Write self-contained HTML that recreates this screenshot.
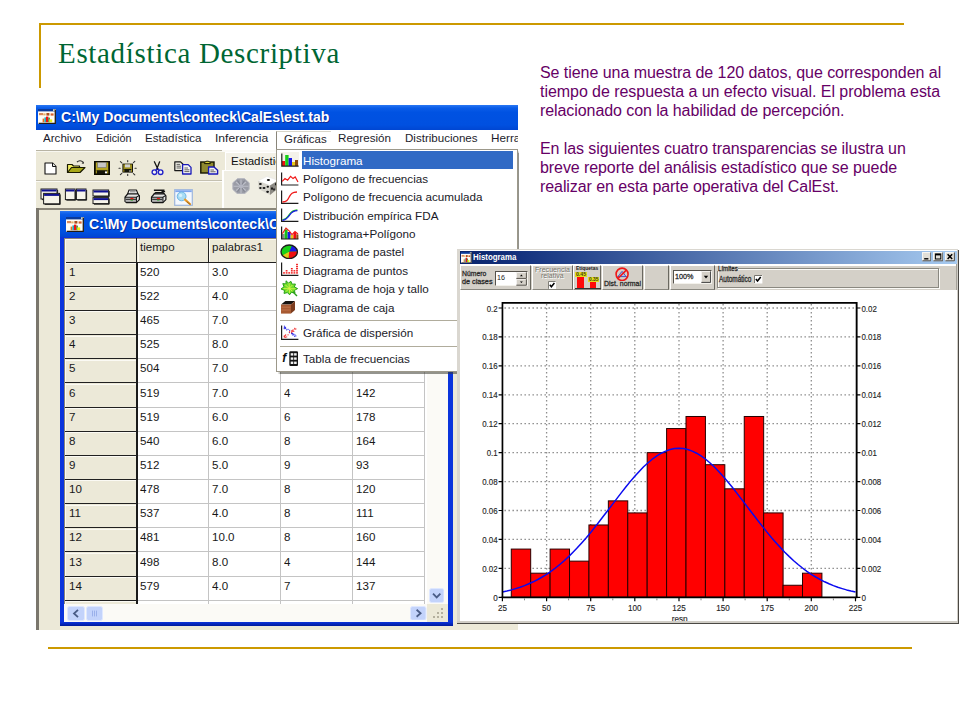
<!DOCTYPE html>
<html lang="es">
<head>
<meta charset="utf-8">
<title>Estadística Descriptiva</title>
<style>
html,body{margin:0;padding:0}
body{width:960px;height:720px;background:#fff;position:relative;overflow:hidden;font-family:"Liberation Sans",sans-serif}
.a{position:absolute}
.gold{position:absolute;background:#cc9900}
#title{position:absolute;left:58px;top:38.6px;margin:0;font-family:"Liberation Serif",serif;font-weight:normal;font-size:29px;line-height:29px;letter-spacing:.67px;color:#006633;white-space:nowrap}
#para{position:absolute;left:540px;top:63px;margin:0;font-family:"Liberation Sans",sans-serif;font-size:16px;line-height:19px;color:#660066;letter-spacing:-.08px;white-space:nowrap}
#para .l{letter-spacing:-.05px}
.t{position:absolute;white-space:nowrap;line-height:1}
</style>
</head>
<body>
<div class="gold" style="left:39px;top:23px;width:865px;height:2px"></div>
<div class="gold" style="left:39px;top:23px;width:2px;height:65px"></div>
<div class="gold" style="left:48px;top:647px;width:864px;height:2px"></div>
<h1 id="title">Estadística Descriptiva</h1>
<p id="para"><span class="l">Se tiene una muestra de 120 datos, que corresponden al</span><br><span class="l">tiempo de respuesta a un efecto visual. El problema esta</span><br>relacionado con la habilidad de percepción.<br><br>En las siguientes cuatro transparencias se ilustra un<br>breve reporte del análisis estadístico que se puede<br>realizar en esta parte operativa del CalEst.</p>

<div class="a" style="left:0;top:0;width:518px;height:630px;overflow:hidden">
<div class="a" style="left:36px;top:105px;width:482px;height:525px;background:#ece9d8"></div>
<div class="a" style="left:36px;top:105px;width:482px;height:25px;background:linear-gradient(#2a78f4 0,#0a5ce8 12%,#0052e2 30%,#0050e0 80%,#0046d2 100%)"></div>
<svg class="a" style="left:38px;top:109px" width="18" height="15" viewBox="0 0 18 15" preserveAspectRatio="none"><rect x="0" y="0" width="18" height="15" fill="#fffdf6"/><rect x="0" y="0" width="17" height="2.4" fill="#0a3a9a"/><rect x="15" y="0.3" width="2" height="1.6" fill="#dfe6d0"/><rect x="1" y="4" width="4" height="2.2" fill="#d98a5a"/><rect x="5.2" y="4.4" width="2.4" height="2" fill="#e9b26a"/><rect x="8.4" y="4" width="3" height="2.6" fill="#a8501e"/><rect x="12.6" y="4.4" width="3" height="2.2" fill="#d6602a"/><rect x="4.6" y="9.6" width="1.8" height="3.6" fill="#e8701a"/><rect x="6.4" y="8.4" width="1.6" height="4.8" fill="#20b0c0"/><rect x="8" y="7.6" width="2.4" height="5.6" fill="#f01010"/><rect x="10.4" y="8.6" width="1.4" height="4.6" fill="#208030"/><rect x="11.2" y="10.4" width="3" height="2.8" fill="#e8f018"/><path d="M17.3 0.5V14.3H0.6" fill="none" stroke="#231a10" stroke-width="1.3"/></svg>
<div class="t" style="left:61.00px;top:110.53px;font-size:13.9px;color:#fff;transform:scaleX(1.0134);transform-origin:0 0;font-weight:bold;text-shadow:1px 1px 0 #0a2a9a;">C:\My Documents\conteck\CalEs\est.tab</div>
<div class="a" style="left:36px;top:130px;width:482px;height:20px;background:#fff"></div>
<div class="a" style="left:276px;top:131px;width:55px;height:20px;background:#fff;border-left:1px solid #8a867a;border-top:1px solid #d8d5c8;box-sizing:border-box"></div>
<div class="t" style="left:42.90px;top:133.45px;font-size:11.4px;color:#1c1c2c;transform:scaleX(1.0180);transform-origin:0 0;">Archivo</div>
<div class="t" style="left:95.75px;top:133.45px;font-size:11.4px;color:#1c1c2c;transform:scaleX(0.9494);transform-origin:0 0;">Edición</div>
<div class="t" style="left:144.50px;top:133.45px;font-size:11.4px;color:#1c1c2c;transform:scaleX(1.0133);transform-origin:0 0;">Estadística</div>
<div class="t" style="left:214.75px;top:133.45px;font-size:11.4px;color:#1c1c2c;transform:scaleX(1.0616);transform-origin:0 0;">Inferencia</div>
<div class="t" style="left:283.50px;top:134.45px;font-size:11.4px;color:#1c1c2c;transform:scaleX(1.0060);transform-origin:0 0;">Gráficas</div>
<div class="t" style="left:338.20px;top:133.45px;font-size:11.4px;color:#1c1c2c;transform:scaleX(1.0199);transform-origin:0 0;">Regresión</div>
<div class="t" style="left:404.90px;top:133.45px;font-size:11.4px;color:#1c1c2c;transform:scaleX(1.0140);transform-origin:0 0;">Distribuciones</div>
<div class="t" style="left:490.80px;top:133.45px;font-size:11.4px;color:#1c1c2c;transform:scaleX(1.0300);transform-origin:0 0;">Herramientas</div>
<div class="a" style="left:36px;top:150px;width:186px;height:1px;background:#b8b4a4"></div>
<div class="a" style="left:36px;top:151px;width:186px;height:1px;background:#f8f7f0"></div>
<div class="a" style="left:36px;top:180px;width:186px;height:1px;background:#c4c0b0"></div>
<div class="a" style="left:36px;top:181px;width:186px;height:1px;background:#fbfaf5"></div>
<div class="a" style="left:222px;top:150px;width:296px;height:2px;background:#fbfaf6"></div>
<div class="a" style="left:225px;top:152px;width:60px;height:19px;background:#f3f1e7;border-left:1px solid #fff;border-top:1px solid #fff;box-sizing:border-box"></div>
<div class="t" style="left:231.20px;top:155.92px;font-size:11.2px;color:#101010;transform:scaleX(1.0300);transform-origin:0 0;">Estadística</div>
<div class="a" style="left:222px;top:170px;width:296px;height:38px;background:#f0eee3;border-left:2px solid #fff;border-top:1px solid #fff;box-sizing:border-box"></div>
<svg class="a" style="left:43.5px;top:161.5px" width="13" height="13" viewBox="0 0 13 13"><path d="M1 1H8.5L12 4.5V12H1Z" fill="#fff" stroke="#111" stroke-width="1.1" stroke-linejoin="round"/><path d="M8.5 1V4.5H12" fill="#e8e8e8" stroke="#111" stroke-width="1"/></svg>
<svg class="a" style="left:66px;top:159px" width="20" height="15" viewBox="0 0 20 15"><path d="M1.5 5.5H6L7.5 7H13.5V13.5H1.5Z" fill="#f2ee62" stroke="#1a1a00" stroke-width="1.2" stroke-linejoin="round"/><path d="M1.5 13.5L5.5 8.5H19L14 13.5Z" fill="#a8a818" stroke="#1a1a00" stroke-width="1.2" stroke-linejoin="round"/><path d="M11 3.2C12.5 1.4 15.5 1.2 17 3.4" fill="none" stroke="#222" stroke-width="1.1"/><path d="M15.6 4.6L17.8 4.8L17.9 2.4Z" fill="#222"/></svg>
<svg class="a" style="left:93.5px;top:160.5px" width="16" height="14" viewBox="0 0 16 14"><rect x="0.6" y="0.6" width="14.8" height="12.8" fill="#15150a" stroke="#0a0a00" stroke-width="1.2"/><rect x="1.8" y="1.4" width="12.4" height="7" fill="#b8a822"/><rect x="3.6" y="1.4" width="8.6" height="5.2" fill="#c6c6c6" stroke="#6e6e6e" stroke-width=".6"/><rect x="1.8" y="8.2" width="12.4" height="1" fill="#c8b828"/><rect x="1.8" y="9.4" width="1" height="3" fill="#b8a822"/><rect x="13.2" y="9.4" width="1" height="3" fill="#b8a822"/><circle cx="12" cy="11.4" r="1.1" fill="#fff"/></svg>
<svg class="a" style="left:118px;top:159.5px" width="19" height="16" viewBox="0 0 19 16"><rect x="4.4" y="3.6" width="10.6" height="9" fill="#15150a"/><rect x="5.4" y="4.4" width="8.6" height="4.6" fill="#9c8f20"/><rect x="7" y="4.4" width="5" height="3" fill="#d2d2d2"/><rect x="5.4" y="9.4" width="0.9" height="2.4" fill="#b8a822"/><rect x="13.1" y="9.4" width="0.9" height="2.4" fill="#b8a822"/><circle cx="12" cy="11" r=".8" fill="#ddd"/><g stroke="#333" stroke-width="1.1" stroke-linecap="round"><path d="M9.7 .6V1.8M9.7 14.4V15.4M1 8.2H2.2M17 8.2H18.2M2.4 1.6L3.8 2.8M16.8 1.4L15.4 2.6M2.4 14.6L3.8 13.4M16.8 14.8L15.4 13.6"/></g></svg>
<svg class="a" style="left:151px;top:160.5px" width="13" height="15" viewBox="0 0 13 15"><path d="M3.4 .8L7 8.6M8.6 .8L5.6 8.6" stroke="#151515" stroke-width="1.3" fill="none" stroke-linecap="round"/><circle cx="3.4" cy="11.2" r="2.3" fill="#fff" fill-opacity=".6" stroke="#2222c8" stroke-width="1.4"/><circle cx="9.6" cy="11.2" r="2.3" fill="#fff" fill-opacity=".6" stroke="#2222c8" stroke-width="1.4"/><path d="M4.6 9.4L6 7.6M8.4 9.4L7 7.6" stroke="#2222c8" stroke-width="1.3"/></svg>
<svg class="a" style="left:173.5px;top:160.5px" width="18" height="14" viewBox="0 0 18 14"><path d="M.8 .8H6.6L8.8 3V9.6H.8Z" fill="#ecebe2" stroke="#1a1a1a" stroke-width="1.2" stroke-linejoin="round"/><path d="M2.6 3.4H6M2.6 5.2H7M2.6 7H7" stroke="#555" stroke-width=".9"/><path d="M8.6 3.6H14.2L17 6.4V13H8.6Z" fill="#f4f4f4" stroke="#1818b8" stroke-width="1.3" stroke-linejoin="round"/><path d="M10.4 7H14M10.4 8.8H15.4M10.4 10.6H15.4" stroke="#666" stroke-width="1"/></svg>
<svg class="a" style="left:199.5px;top:160px" width="19" height="15" viewBox="0 0 19 15"><rect x=".8" y="2" width="13.2" height="11" fill="#8f8a30" stroke="#141400" stroke-width="1.4"/><path d="M4.4 3.6C4.4 .4 10.4 .4 10.4 3.6Z" fill="#d8d23a" stroke="#141400" stroke-width="1"/><path d="M8.6 7H14L17.6 10.2V14H8.6Z" fill="#f2f2f6" stroke="#1818b8" stroke-width="1.4" stroke-linejoin="round"/><path d="M10.4 10H14M10.4 11.8H15.6" stroke="#666" stroke-width="1.1"/></svg>
<svg class="a" style="left:40px;top:188px" width="22" height="18" viewBox="0 0 22 18"><rect x="1" y="1" width="16" height="10" fill="#f6f4ea" stroke="#1c1c1c" stroke-width="1"/><rect x="1.5" y="1.5" width="15" height="2" fill="#101090"/><path d="M17.6 2V11.6H2" stroke="#1c1c1c" stroke-width="1" fill="none"/><rect x="3.6" y="5.4" width="16" height="10.4" fill="#f6f4ea" stroke="#1c1c1c" stroke-width="1"/><rect x="4.1" y="5.9" width="15" height="2" fill="#101090"/><path d="M20.200000000000003 6.4V16.400000000000002H4.6" stroke="#1c1c1c" stroke-width="1" fill="none"/></svg>
<svg class="a" style="left:64px;top:188px" width="24" height="14" viewBox="0 0 24 14"><rect x="1.4" y="1" width="9.6" height="10.6" fill="#f6f4ea" stroke="#1c1c1c" stroke-width="1"/><rect x="1.9" y="1.5" width="8.6" height="2" fill="#101090"/><path d="M11.6 2V12.2H2.4" stroke="#1c1c1c" stroke-width="1" fill="none"/><rect x="12.4" y="1" width="9.6" height="10.6" fill="#f6f4ea" stroke="#1c1c1c" stroke-width="1"/><rect x="12.9" y="1.5" width="8.6" height="2" fill="#101090"/><path d="M22.6 2V12.2H13.4" stroke="#1c1c1c" stroke-width="1" fill="none"/></svg>
<svg class="a" style="left:92px;top:189px" width="19" height="17" viewBox="0 0 19 17"><rect x="1" y="1" width="15.6" height="6" fill="#f6f4ea" stroke="#1c1c1c" stroke-width="1"/><rect x="1.5" y="1.5" width="14.6" height="2" fill="#101090"/><path d="M17.200000000000003 2V7.6H2" stroke="#1c1c1c" stroke-width="1" fill="none"/><rect x="1" y="8.6" width="15.6" height="6" fill="#f6f4ea" stroke="#1c1c1c" stroke-width="1"/><rect x="1.5" y="9.1" width="14.6" height="2" fill="#101090"/><path d="M17.200000000000003 9.6V15.2H2" stroke="#1c1c1c" stroke-width="1" fill="none"/></svg>
<svg class="a" style="left:124px;top:189px" width="17" height="16" viewBox="0 0 17 16"><path d="M5 1H12.4L14 5H3.6Z" fill="#efefef" stroke="#151515" stroke-width="1.1" stroke-linejoin="round"/><path d="M6 2.8H11.6" stroke="#666" stroke-width=".8"/><path d="M3.6 5L1 8.2V12.4L2.4 13.6H12.4L15.4 10.6V6.8L14 5Z" fill="#e4e4e4" stroke="#151515" stroke-width="1.2" stroke-linejoin="round"/><path d="M1 8.2H12.4L15.4 6.4M12.4 8.2V13.6" stroke="#151515" stroke-width="1.1" fill="none"/><rect x="1.6" y="9.6" width="10.4" height="1.5" fill="#3c3c3c"/><rect x="1.6" y="11.6" width="10.4" height="1.2" fill="#8a8a8a"/><rect x="6.4" y="8.9" width="3" height="1.4" fill="#e81818"/><rect x="6.6" y="10.6" width="2.4" height=".9" fill="#18a018"/></svg>
<svg class="a" style="left:149.5px;top:189px" width="18" height="16" viewBox="0 0 17 16"><path d="M3.4 1.2H14M11 2.6H14.6" stroke="#151515" stroke-width="1.4"/><path d="M5 3.6H12.8L14 5H3.6Z" fill="#efefef" stroke="#151515" stroke-width="1.1" stroke-linejoin="round"/><path d="M6 4.2H6" stroke="#666" stroke-width=".8"/><path d="M3.6 5L1 8.2V12.4L2.4 13.6H12.4L15.4 10.6V6.8L14 5Z" fill="#e4e4e4" stroke="#151515" stroke-width="1.2" stroke-linejoin="round"/><path d="M1 8.2H12.4L15.4 6.4M12.4 8.2V13.6" stroke="#151515" stroke-width="1.1" fill="none"/><rect x="1.6" y="9.6" width="10.4" height="1.5" fill="#3c3c3c"/><rect x="1.6" y="11.6" width="10.4" height="1.2" fill="#8a8a8a"/><rect x="6.4" y="8.9" width="3" height="1.4" fill="#e81818"/><rect x="6.6" y="10.6" width="2.4" height=".9" fill="#18a018"/></svg>
<svg class="a" style="left:173.5px;top:188.5px" width="19" height="17" viewBox="0 0 19 17"><rect x=".7" y=".7" width="17.6" height="15.6" fill="#f4f8fe" stroke="#9eb6dc" stroke-width="1.2"/><rect x="1.3" y="1.3" width="16.4" height="1.8" fill="#7ea6ee"/><circle cx="7.6" cy="7.4" r="4.4" fill="#a8dcf4" stroke="#6eb6e4" stroke-width="1"/><circle cx="6.6" cy="6.4" r="1.6" fill="#d8f2fc"/><path d="M11 10.6L16 15" stroke="#e89a2a" stroke-width="2.2" stroke-linecap="round"/><path d="M12.6 12.6L16.4 15.6" stroke="#8a5a1a" stroke-width=".8"/></svg>
<svg class="a" style="left:231.5px;top:177.5px" width="18" height="16.5" viewBox="0 0 18 16.5"><path d="M5.6 .6H12.4L17.2 4.8V11.4L12.6 15.8H5.4L.8 11.4V4.8Z" fill="#9a9ca6" stroke="#b9bac2" stroke-width="1"/><path d="M4 4L14 12.6M14 4L4 12.6M9 1.4V15M1.6 8.2H16.4" stroke="#c6c8d2" stroke-width="1.1" opacity=".8"/><path d="M5.6 2.6L12.4 13.8M12.4 2.6L5.6 13.8" stroke="#7c7e8c" stroke-width="1" opacity=".8"/><circle cx="9" cy="8.2" r="2" fill="#b4b6c2"/></svg>
<svg class="a" style="left:256.5px;top:174.5px" width="22" height="21" viewBox="0 0 22 21"><path d="M1 6L10 1.4L21 5.4L13 10.6Z" fill="#fff" stroke="#e6e6e6" stroke-width=".6"/><path d="M1 6L13 10.6V20L1.6 14Z" fill="#d6d4cc"/><path d="M13 10.6L21 5.4V13.6L13 20Z" fill="#8c8a84"/><ellipse cx="11.4" cy="5" rx="1.6" ry=".9" fill="#111"/><ellipse cx="3.4" cy="9" rx="1.4" ry="1.1" fill="#111"/><ellipse cx="7" cy="13" rx="1.5" ry="1.1" fill="#111"/><ellipse cx="10.6" cy="16.8" rx="1.4" ry="1.1" fill="#111"/><ellipse cx="3.4" cy="13" rx="1.2" ry="1" fill="#111"/><ellipse cx="10.8" cy="11.8" rx="1.2" ry="1" fill="#111"/><ellipse cx="15" cy="13.6" rx=".9" ry="1.4" fill="#111"/><ellipse cx="19" cy="9.2" rx=".9" ry="1.4" fill="#111"/><ellipse cx="17" cy="14.4" rx=".8" ry="1.2" fill="#111"/></svg>
<div class="a" style="left:36px;top:208px;width:482px;height:2px;background:#8a867a"></div>
<div class="a" style="left:36px;top:208px;width:2.5px;height:422px;background:#7a766c"></div>
<div class="a" style="left:60px;top:211px;width:392.5px;height:414.5px;background:#0a34dc"></div>
<div class="a" style="left:60px;top:621.5px;width:392.5px;height:4px;background:linear-gradient(#0a34dc,#001a9a)"></div>
<div class="a" style="left:60px;top:211px;width:392.5px;height:26px;background:linear-gradient(#2a78f4 0,#0a5ce8 12%,#0052e2 30%,#0050e0 80%,#0046d2 100%)"></div>
<svg class="a" style="left:65.5px;top:216.5px" width="18" height="15" viewBox="0 0 18 15" preserveAspectRatio="none"><rect x="0" y="0" width="18" height="15" fill="#fffdf6"/><rect x="0" y="0" width="17" height="2.4" fill="#0a3a9a"/><rect x="15" y="0.3" width="2" height="1.6" fill="#dfe6d0"/><rect x="1" y="4" width="4" height="2.2" fill="#d98a5a"/><rect x="5.2" y="4.4" width="2.4" height="2" fill="#e9b26a"/><rect x="8.4" y="4" width="3" height="2.6" fill="#a8501e"/><rect x="12.6" y="4.4" width="3" height="2.2" fill="#d6602a"/><rect x="4.6" y="9.6" width="1.8" height="3.6" fill="#e8701a"/><rect x="6.4" y="8.4" width="1.6" height="4.8" fill="#20b0c0"/><rect x="8" y="7.6" width="2.4" height="5.6" fill="#f01010"/><rect x="10.4" y="8.6" width="1.4" height="4.6" fill="#208030"/><rect x="11.2" y="10.4" width="3" height="2.8" fill="#e8f018"/><path d="M17.3 0.5V14.3H0.6" fill="none" stroke="#231a10" stroke-width="1.3"/></svg>
<div class="t" style="left:89.20px;top:217.93px;font-size:13.9px;color:#fff;transform:scaleX(1.0134);transform-origin:0 0;font-weight:bold;text-shadow:1px 1px 0 #0a2a9a;">C:\My Documents\conteck\CalEs\est.tab</div>
<div class="a" style="left:64px;top:237.5px;width:384px;height:384px;background:#fff;overflow:hidden">
<div class="a" style="left:-64px;top:-237.5px;width:0;height:0">
<div class="a" style="left:64px;top:237.5px;width:361px;height:25.100000000000023px;background:#ece9d8"></div>
<div class="a" style="left:64px;top:237.5px;width:73.19999999999999px;height:390px;background:#ece9d8"></div>
<div class="a" style="left:64px;top:237.5px;width:384px;height:1px;background:#8a867a"></div>
<div class="a" style="left:64px;top:237.5px;width:1px;height:384px;background:#8a867a"></div>
<div class="t" style="left:140.10px;top:242.42px;font-size:11.2px;color:#181818;transform:scaleX(1.0350);transform-origin:0 0;">tiempo</div>
<div class="t" style="left:211.90px;top:242.42px;font-size:11.2px;color:#181818;transform:scaleX(1.0350);transform-origin:0 0;">palabras1</div>
<div class="t" style="left:283.90px;top:242.42px;font-size:11.2px;color:#181818;transform:scaleX(1.0350);transform-origin:0 0;">palabras2</div>
<div class="t" style="left:355.90px;top:242.42px;font-size:11.2px;color:#181818;transform:scaleX(1.0350);transform-origin:0 0;">resp</div>
<div class="a" style="left:207.7px;top:262.6px;width:1.3px;height:370px;background:#c4c4c4"></div>
<div class="a" style="left:279.7px;top:262.6px;width:1.3px;height:370px;background:#c4c4c4"></div>
<div class="a" style="left:351.7px;top:262.6px;width:1.3px;height:370px;background:#c4c4c4"></div>
<div class="a" style="left:423.7px;top:262.6px;width:1.3px;height:370px;background:#c4c4c4"></div>
<div class="a" style="left:137.2px;top:286px;width:287.8px;height:1.2px;background:#c4c4c4"></div>
<div class="a" style="left:137.2px;top:310px;width:287.8px;height:1.2px;background:#c4c4c4"></div>
<div class="a" style="left:137.2px;top:334px;width:287.8px;height:1.2px;background:#c4c4c4"></div>
<div class="a" style="left:137.2px;top:358px;width:287.8px;height:1.2px;background:#c4c4c4"></div>
<div class="a" style="left:137.2px;top:382px;width:287.8px;height:1.2px;background:#c4c4c4"></div>
<div class="a" style="left:137.2px;top:407px;width:287.8px;height:1.2px;background:#c4c4c4"></div>
<div class="a" style="left:137.2px;top:431px;width:287.8px;height:1.2px;background:#c4c4c4"></div>
<div class="a" style="left:137.2px;top:455px;width:287.8px;height:1.2px;background:#c4c4c4"></div>
<div class="a" style="left:137.2px;top:479px;width:287.8px;height:1.2px;background:#c4c4c4"></div>
<div class="a" style="left:137.2px;top:503px;width:287.8px;height:1.2px;background:#c4c4c4"></div>
<div class="a" style="left:137.2px;top:527px;width:287.8px;height:1.2px;background:#c4c4c4"></div>
<div class="a" style="left:137.2px;top:551px;width:287.8px;height:1.2px;background:#c4c4c4"></div>
<div class="a" style="left:137.2px;top:576px;width:287.8px;height:1.2px;background:#c4c4c4"></div>
<div class="a" style="left:137.2px;top:600px;width:287.8px;height:1.2px;background:#c4c4c4"></div>
<div class="a" style="left:137.2px;top:624px;width:287.8px;height:1.2px;background:#c4c4c4"></div>
<div class="a" style="left:64.5px;top:261.70px;width:360.5px;height:1.3px;background:#202020"></div>
<div class="a" style="left:65px;top:238.5px;width:360px;height:1px;background:#fbfaf4"></div>
<div class="a" style="left:136.1px;top:238px;width:1.4px;height:25.200000000000024px;background:#202020"></div>
<div class="a" style="left:137.6px;top:238.5px;width:1px;height:23.100000000000023px;background:#fbfaf4"></div>
<div class="a" style="left:207.9px;top:238px;width:1.4px;height:25.200000000000024px;background:#202020"></div>
<div class="a" style="left:209.4px;top:238.5px;width:1px;height:23.100000000000023px;background:#fbfaf4"></div>
<div class="a" style="left:279.9px;top:238px;width:1.4px;height:25.200000000000024px;background:#202020"></div>
<div class="a" style="left:281.4px;top:238.5px;width:1px;height:23.100000000000023px;background:#fbfaf4"></div>
<div class="a" style="left:351.9px;top:238px;width:1.4px;height:25.200000000000024px;background:#202020"></div>
<div class="a" style="left:353.4px;top:238.5px;width:1px;height:23.100000000000023px;background:#fbfaf4"></div>
<div class="a" style="left:423.9px;top:238px;width:1.4px;height:25.200000000000024px;background:#202020"></div>
<div class="a" style="left:136.1px;top:262.6px;width:1.5px;height:370px;background:#1a1a1a"></div>
<div class="a" style="left:65px;top:238.5px;width:1px;height:370px;background:#fbfaf4"></div>
<div class="a" style="left:64.5px;top:286px;width:72.69999999999999px;height:1.3px;background:#202020"></div>
<div class="a" style="left:65.5px;top:263.20px;width:70.19999999999999px;height:1px;background:#fbfaf4"></div>
<div class="t" style="left:69.20px;top:266.82px;font-size:11.2px;color:#181818;transform:scaleX(1.0350);transform-origin:0 0;">1</div>
<div class="t" style="left:140.10px;top:266.82px;font-size:11.2px;color:#181818;transform:scaleX(1.0350);transform-origin:0 0;">520</div>
<div class="t" style="left:211.90px;top:266.82px;font-size:11.2px;color:#181818;transform:scaleX(1.0350);transform-origin:0 0;">3.0</div>
<div class="t" style="left:283.90px;top:266.82px;font-size:11.2px;color:#181818;transform:scaleX(1.0350);transform-origin:0 0;">5</div>
<div class="t" style="left:355.90px;top:266.82px;font-size:11.2px;color:#181818;transform:scaleX(1.0350);transform-origin:0 0;">131</div>
<div class="a" style="left:64.5px;top:310px;width:72.69999999999999px;height:1.3px;background:#202020"></div>
<div class="a" style="left:65.5px;top:287.34px;width:70.19999999999999px;height:1px;background:#fbfaf4"></div>
<div class="t" style="left:69.20px;top:290.96px;font-size:11.2px;color:#181818;transform:scaleX(1.0350);transform-origin:0 0;">2</div>
<div class="t" style="left:140.10px;top:290.96px;font-size:11.2px;color:#181818;transform:scaleX(1.0350);transform-origin:0 0;">522</div>
<div class="t" style="left:211.90px;top:290.96px;font-size:11.2px;color:#181818;transform:scaleX(1.0350);transform-origin:0 0;">4.0</div>
<div class="t" style="left:283.90px;top:290.96px;font-size:11.2px;color:#181818;transform:scaleX(1.0350);transform-origin:0 0;">7</div>
<div class="t" style="left:355.90px;top:290.96px;font-size:11.2px;color:#181818;transform:scaleX(1.0350);transform-origin:0 0;">152</div>
<div class="a" style="left:64.5px;top:334px;width:72.69999999999999px;height:1.3px;background:#202020"></div>
<div class="a" style="left:65.5px;top:311.48px;width:70.19999999999999px;height:1px;background:#fbfaf4"></div>
<div class="t" style="left:69.20px;top:315.10px;font-size:11.2px;color:#181818;transform:scaleX(1.0350);transform-origin:0 0;">3</div>
<div class="t" style="left:140.10px;top:315.10px;font-size:11.2px;color:#181818;transform:scaleX(1.0350);transform-origin:0 0;">465</div>
<div class="t" style="left:211.90px;top:315.10px;font-size:11.2px;color:#181818;transform:scaleX(1.0350);transform-origin:0 0;">7.0</div>
<div class="t" style="left:283.90px;top:315.10px;font-size:11.2px;color:#181818;transform:scaleX(1.0350);transform-origin:0 0;">6</div>
<div class="t" style="left:355.90px;top:315.10px;font-size:11.2px;color:#181818;transform:scaleX(1.0350);transform-origin:0 0;">118</div>
<div class="a" style="left:64.5px;top:358px;width:72.69999999999999px;height:1.3px;background:#202020"></div>
<div class="a" style="left:65.5px;top:335.62px;width:70.19999999999999px;height:1px;background:#fbfaf4"></div>
<div class="t" style="left:69.20px;top:339.24px;font-size:11.2px;color:#181818;transform:scaleX(1.0350);transform-origin:0 0;">4</div>
<div class="t" style="left:140.10px;top:339.24px;font-size:11.2px;color:#181818;transform:scaleX(1.0350);transform-origin:0 0;">525</div>
<div class="t" style="left:211.90px;top:339.24px;font-size:11.2px;color:#181818;transform:scaleX(1.0350);transform-origin:0 0;">8.0</div>
<div class="t" style="left:283.90px;top:339.24px;font-size:11.2px;color:#181818;transform:scaleX(1.0350);transform-origin:0 0;">9</div>
<div class="t" style="left:355.90px;top:339.24px;font-size:11.2px;color:#181818;transform:scaleX(1.0350);transform-origin:0 0;">126</div>
<div class="a" style="left:64.5px;top:382px;width:72.69999999999999px;height:1.3px;background:#202020"></div>
<div class="a" style="left:65.5px;top:359.76px;width:70.19999999999999px;height:1px;background:#fbfaf4"></div>
<div class="t" style="left:69.20px;top:363.38px;font-size:11.2px;color:#181818;transform:scaleX(1.0350);transform-origin:0 0;">5</div>
<div class="t" style="left:140.10px;top:363.38px;font-size:11.2px;color:#181818;transform:scaleX(1.0350);transform-origin:0 0;">504</div>
<div class="t" style="left:211.90px;top:363.38px;font-size:11.2px;color:#181818;transform:scaleX(1.0350);transform-origin:0 0;">7.0</div>
<div class="t" style="left:283.90px;top:363.38px;font-size:11.2px;color:#181818;transform:scaleX(1.0350);transform-origin:0 0;">5</div>
<div class="t" style="left:355.90px;top:363.38px;font-size:11.2px;color:#181818;transform:scaleX(1.0350);transform-origin:0 0;">150</div>
<div class="a" style="left:64.5px;top:407px;width:72.69999999999999px;height:1.3px;background:#202020"></div>
<div class="a" style="left:65.5px;top:383.90px;width:70.19999999999999px;height:1px;background:#fbfaf4"></div>
<div class="t" style="left:69.20px;top:387.52px;font-size:11.2px;color:#181818;transform:scaleX(1.0350);transform-origin:0 0;">6</div>
<div class="t" style="left:140.10px;top:387.52px;font-size:11.2px;color:#181818;transform:scaleX(1.0350);transform-origin:0 0;">519</div>
<div class="t" style="left:211.90px;top:387.52px;font-size:11.2px;color:#181818;transform:scaleX(1.0350);transform-origin:0 0;">7.0</div>
<div class="t" style="left:283.90px;top:387.52px;font-size:11.2px;color:#181818;transform:scaleX(1.0350);transform-origin:0 0;">4</div>
<div class="t" style="left:355.90px;top:387.52px;font-size:11.2px;color:#181818;transform:scaleX(1.0350);transform-origin:0 0;">142</div>
<div class="a" style="left:64.5px;top:431px;width:72.69999999999999px;height:1.3px;background:#202020"></div>
<div class="a" style="left:65.5px;top:408.04px;width:70.19999999999999px;height:1px;background:#fbfaf4"></div>
<div class="t" style="left:69.20px;top:411.66px;font-size:11.2px;color:#181818;transform:scaleX(1.0350);transform-origin:0 0;">7</div>
<div class="t" style="left:140.10px;top:411.66px;font-size:11.2px;color:#181818;transform:scaleX(1.0350);transform-origin:0 0;">519</div>
<div class="t" style="left:211.90px;top:411.66px;font-size:11.2px;color:#181818;transform:scaleX(1.0350);transform-origin:0 0;">6.0</div>
<div class="t" style="left:283.90px;top:411.66px;font-size:11.2px;color:#181818;transform:scaleX(1.0350);transform-origin:0 0;">6</div>
<div class="t" style="left:355.90px;top:411.66px;font-size:11.2px;color:#181818;transform:scaleX(1.0350);transform-origin:0 0;">178</div>
<div class="a" style="left:64.5px;top:455px;width:72.69999999999999px;height:1.3px;background:#202020"></div>
<div class="a" style="left:65.5px;top:432.18px;width:70.19999999999999px;height:1px;background:#fbfaf4"></div>
<div class="t" style="left:69.20px;top:435.80px;font-size:11.2px;color:#181818;transform:scaleX(1.0350);transform-origin:0 0;">8</div>
<div class="t" style="left:140.10px;top:435.80px;font-size:11.2px;color:#181818;transform:scaleX(1.0350);transform-origin:0 0;">540</div>
<div class="t" style="left:211.90px;top:435.80px;font-size:11.2px;color:#181818;transform:scaleX(1.0350);transform-origin:0 0;">6.0</div>
<div class="t" style="left:283.90px;top:435.80px;font-size:11.2px;color:#181818;transform:scaleX(1.0350);transform-origin:0 0;">8</div>
<div class="t" style="left:355.90px;top:435.80px;font-size:11.2px;color:#181818;transform:scaleX(1.0350);transform-origin:0 0;">164</div>
<div class="a" style="left:64.5px;top:479px;width:72.69999999999999px;height:1.3px;background:#202020"></div>
<div class="a" style="left:65.5px;top:456.32px;width:70.19999999999999px;height:1px;background:#fbfaf4"></div>
<div class="t" style="left:69.20px;top:459.94px;font-size:11.2px;color:#181818;transform:scaleX(1.0350);transform-origin:0 0;">9</div>
<div class="t" style="left:140.10px;top:459.94px;font-size:11.2px;color:#181818;transform:scaleX(1.0350);transform-origin:0 0;">512</div>
<div class="t" style="left:211.90px;top:459.94px;font-size:11.2px;color:#181818;transform:scaleX(1.0350);transform-origin:0 0;">5.0</div>
<div class="t" style="left:283.90px;top:459.94px;font-size:11.2px;color:#181818;transform:scaleX(1.0350);transform-origin:0 0;">9</div>
<div class="t" style="left:355.90px;top:459.94px;font-size:11.2px;color:#181818;transform:scaleX(1.0350);transform-origin:0 0;">93</div>
<div class="a" style="left:64.5px;top:503px;width:72.69999999999999px;height:1.3px;background:#202020"></div>
<div class="a" style="left:65.5px;top:480.46px;width:70.19999999999999px;height:1px;background:#fbfaf4"></div>
<div class="t" style="left:69.20px;top:484.08px;font-size:11.2px;color:#181818;transform:scaleX(1.0350);transform-origin:0 0;">10</div>
<div class="t" style="left:140.10px;top:484.08px;font-size:11.2px;color:#181818;transform:scaleX(1.0350);transform-origin:0 0;">478</div>
<div class="t" style="left:211.90px;top:484.08px;font-size:11.2px;color:#181818;transform:scaleX(1.0350);transform-origin:0 0;">7.0</div>
<div class="t" style="left:283.90px;top:484.08px;font-size:11.2px;color:#181818;transform:scaleX(1.0350);transform-origin:0 0;">8</div>
<div class="t" style="left:355.90px;top:484.08px;font-size:11.2px;color:#181818;transform:scaleX(1.0350);transform-origin:0 0;">120</div>
<div class="a" style="left:64.5px;top:527px;width:72.69999999999999px;height:1.3px;background:#202020"></div>
<div class="a" style="left:65.5px;top:504.60px;width:70.19999999999999px;height:1px;background:#fbfaf4"></div>
<div class="t" style="left:69.20px;top:508.22px;font-size:11.2px;color:#181818;transform:scaleX(1.0350);transform-origin:0 0;">11</div>
<div class="t" style="left:140.10px;top:508.22px;font-size:11.2px;color:#181818;transform:scaleX(1.0350);transform-origin:0 0;">537</div>
<div class="t" style="left:211.90px;top:508.22px;font-size:11.2px;color:#181818;transform:scaleX(1.0350);transform-origin:0 0;">4.0</div>
<div class="t" style="left:283.90px;top:508.22px;font-size:11.2px;color:#181818;transform:scaleX(1.0350);transform-origin:0 0;">8</div>
<div class="t" style="left:355.90px;top:508.22px;font-size:11.2px;color:#181818;transform:scaleX(1.0350);transform-origin:0 0;">111</div>
<div class="a" style="left:64.5px;top:551px;width:72.69999999999999px;height:1.3px;background:#202020"></div>
<div class="a" style="left:65.5px;top:528.74px;width:70.19999999999999px;height:1px;background:#fbfaf4"></div>
<div class="t" style="left:69.20px;top:532.36px;font-size:11.2px;color:#181818;transform:scaleX(1.0350);transform-origin:0 0;">12</div>
<div class="t" style="left:140.10px;top:532.36px;font-size:11.2px;color:#181818;transform:scaleX(1.0350);transform-origin:0 0;">481</div>
<div class="t" style="left:211.90px;top:532.36px;font-size:11.2px;color:#181818;transform:scaleX(1.0350);transform-origin:0 0;">10.0</div>
<div class="t" style="left:283.90px;top:532.36px;font-size:11.2px;color:#181818;transform:scaleX(1.0350);transform-origin:0 0;">8</div>
<div class="t" style="left:355.90px;top:532.36px;font-size:11.2px;color:#181818;transform:scaleX(1.0350);transform-origin:0 0;">160</div>
<div class="a" style="left:64.5px;top:576px;width:72.69999999999999px;height:1.3px;background:#202020"></div>
<div class="a" style="left:65.5px;top:552.88px;width:70.19999999999999px;height:1px;background:#fbfaf4"></div>
<div class="t" style="left:69.20px;top:556.50px;font-size:11.2px;color:#181818;transform:scaleX(1.0350);transform-origin:0 0;">13</div>
<div class="t" style="left:140.10px;top:556.50px;font-size:11.2px;color:#181818;transform:scaleX(1.0350);transform-origin:0 0;">498</div>
<div class="t" style="left:211.90px;top:556.50px;font-size:11.2px;color:#181818;transform:scaleX(1.0350);transform-origin:0 0;">8.0</div>
<div class="t" style="left:283.90px;top:556.50px;font-size:11.2px;color:#181818;transform:scaleX(1.0350);transform-origin:0 0;">4</div>
<div class="t" style="left:355.90px;top:556.50px;font-size:11.2px;color:#181818;transform:scaleX(1.0350);transform-origin:0 0;">144</div>
<div class="a" style="left:64.5px;top:600px;width:72.69999999999999px;height:1.3px;background:#202020"></div>
<div class="a" style="left:65.5px;top:577.02px;width:70.19999999999999px;height:1px;background:#fbfaf4"></div>
<div class="t" style="left:69.20px;top:580.64px;font-size:11.2px;color:#181818;transform:scaleX(1.0350);transform-origin:0 0;">14</div>
<div class="t" style="left:140.10px;top:580.64px;font-size:11.2px;color:#181818;transform:scaleX(1.0350);transform-origin:0 0;">579</div>
<div class="t" style="left:211.90px;top:580.64px;font-size:11.2px;color:#181818;transform:scaleX(1.0350);transform-origin:0 0;">4.0</div>
<div class="t" style="left:283.90px;top:580.64px;font-size:11.2px;color:#181818;transform:scaleX(1.0350);transform-origin:0 0;">7</div>
<div class="t" style="left:355.90px;top:580.64px;font-size:11.2px;color:#181818;transform:scaleX(1.0350);transform-origin:0 0;">137</div>
<div class="a" style="left:64.5px;top:624px;width:72.69999999999999px;height:1.3px;background:#202020"></div>
<div class="a" style="left:65.5px;top:601.16px;width:70.19999999999999px;height:1px;background:#fbfaf4"></div>
<div class="t" style="left:69.20px;top:604.78px;font-size:11.2px;color:#181818;transform:scaleX(1.0350);transform-origin:0 0;">15</div>
<div class="t" style="left:140.10px;top:604.78px;font-size:11.2px;color:#181818;transform:scaleX(1.0350);transform-origin:0 0;">530</div>
<div class="t" style="left:211.90px;top:604.78px;font-size:11.2px;color:#181818;transform:scaleX(1.0350);transform-origin:0 0;">6.0</div>
<div class="t" style="left:283.90px;top:604.78px;font-size:11.2px;color:#181818;transform:scaleX(1.0350);transform-origin:0 0;">5</div>
<div class="t" style="left:355.90px;top:604.78px;font-size:11.2px;color:#181818;transform:scaleX(1.0350);transform-origin:0 0;">129</div>
<div class="a" style="left:426.5px;top:238px;width:21.5px;height:366px;background:#fbfaf6"></div>
<div class="a" style="left:64px;top:603.5px;width:384px;height:18px;background:#fbfaf6"></div>
<svg class="a" style="left:66.5px;top:605.5px" width="18" height="15" viewBox="0 0 18 15"><rect x=".5" y=".5" width="17" height="14" rx="2" fill="#c3d3fb" stroke="#dfe8ff" stroke-width="1"/><path d="M11 3.8L7 7.5L11 11.2" fill="none" stroke="#4a5c86" stroke-width="1.8"/></svg>
<svg class="a" style="left:86px;top:605.5px" width="17" height="15" viewBox="0 0 17 15"><rect x=".5" y=".5" width="16" height="14" rx="2" fill="#c3d3fb" stroke="#dfe8ff" stroke-width="1"/><path d="M6.5 4.6V10.4M8.5 4.6V10.4M10.5 4.6V10.4" fill="none" stroke="#9ab0ea" stroke-width="1"/></svg>
<svg class="a" style="left:410px;top:605.5px" width="16.5" height="14.6" viewBox="0 0 16.5 14.6"><rect x=".5" y=".5" width="15.5" height="13.6" rx="2" fill="#c3d3fb" stroke="#dfe8ff" stroke-width="1"/><path d="M6.6 3.8L10.6 7.3L6.6 10.8" fill="none" stroke="#4a5c86" stroke-width="1.8"/></svg>
<svg class="a" style="left:429px;top:588.3px" width="15.4" height="15" viewBox="0 0 15.4 15"><rect x=".5" y=".5" width="14.4" height="14" rx="2" fill="#c3d3fb" stroke="#dfe8ff" stroke-width="1"/><path d="M4 5.6L7.7 9.4L11.4 5.6" fill="none" stroke="#4a5c86" stroke-width="1.8"/></svg>
<div class="a" style="left:427px;top:604px;width:21px;height:18px;background:#ece9d8"></div>
<svg class="a" style="left:431px;top:606px" width="15" height="15" viewBox="0 0 15 15"><g fill="#b4b09e"><rect x="10" y="2" width="2" height="2"/><rect x="10" y="6" width="2" height="2"/><rect x="6" y="6" width="2" height="2"/><rect x="10" y="10" width="2" height="2"/><rect x="6" y="10" width="2" height="2"/><rect x="2" y="10" width="2" height="2"/></g></svg>
</div></div>
</div>
<div class="a" style="left:0;top:0;width:519px;height:380px;overflow:hidden">
<div class="a" style="left:276px;top:149px;width:241.5px;height:222.5px;background:#fff;border:1px solid #9c988a;box-sizing:border-box;box-shadow:1.5px 1.5px 1px rgba(60,60,50,.55)"></div>
<div class="a" style="left:301.6px;top:151.4px;width:211.6px;height:17.6px;background:#316ac5"></div>
<div class="t" style="left:303.30px;top:155.73px;font-size:11.3px;color:#fff;transform:scaleX(1.0320);transform-origin:0 0;">Histograma</div>
<div class="t" style="left:303.30px;top:174.03px;font-size:11.3px;color:#1a1a28;transform:scaleX(1.0320);transform-origin:0 0;">Polígono de frecuencias</div>
<div class="t" style="left:303.30px;top:192.33px;font-size:11.3px;color:#1a1a28;transform:scaleX(1.0320);transform-origin:0 0;">Polígono de frecuencia acumulada</div>
<div class="t" style="left:303.30px;top:210.83px;font-size:11.3px;color:#1a1a28;transform:scaleX(1.0320);transform-origin:0 0;">Distribución empírica FDA</div>
<div class="t" style="left:303.30px;top:229.13px;font-size:11.3px;color:#1a1a28;transform:scaleX(1.0320);transform-origin:0 0;">Histograma+Polígono</div>
<div class="t" style="left:303.30px;top:247.43px;font-size:11.3px;color:#1a1a28;transform:scaleX(1.0320);transform-origin:0 0;">Diagrama de pastel</div>
<div class="t" style="left:303.30px;top:265.83px;font-size:11.3px;color:#1a1a28;transform:scaleX(1.0320);transform-origin:0 0;">Diagrama de puntos</div>
<div class="t" style="left:303.30px;top:284.13px;font-size:11.3px;color:#1a1a28;transform:scaleX(1.0320);transform-origin:0 0;">Diagrama de hoja y tallo</div>
<div class="t" style="left:303.30px;top:302.63px;font-size:11.3px;color:#1a1a28;transform:scaleX(1.0320);transform-origin:0 0;">Diagrama de caja</div>
<div class="t" style="left:303.30px;top:328.33px;font-size:11.3px;color:#1a1a28;transform:scaleX(1.0320);transform-origin:0 0;">Gráfica de dispersión</div>
<div class="t" style="left:303.30px;top:354.23px;font-size:11.3px;color:#1a1a28;transform:scaleX(1.0320);transform-origin:0 0;">Tabla de frecuencias</div>
<div class="a" style="left:279.5px;top:320px;width:236px;height:1px;background:#b0ac9c"></div>
<div class="a" style="left:279.5px;top:346px;width:236px;height:1px;background:#b0ac9c"></div>
<svg class="a" style="left:279.5px;top:152px" width="19" height="15.5" viewBox="0 0 19 15.5"><rect x="0" y="0" width="19" height="15.5" fill="#f4f2ea"/><path d="M.6 .4V15H19" stroke="#fff" stroke-width="1" fill="none"/><rect x="2" y="9" width="3.2" height="5" fill="#f01010"/><rect x="5.2" y="3" width="3.4" height="11" fill="#18d018"/><rect x="8.6" y="6" width="3.4" height="8" fill="#1818e8"/><rect x="12" y="10" width="3" height="4" fill="#e8c818"/><rect x="15" y="8" width="3" height="6" fill="#8a4a10"/><path d="M1.8 1.6V14.2H18.6" stroke="#1c1c1c" stroke-width="1.2" fill="none"/></svg>
<svg class="a" style="left:279.5px;top:171.5px" width="19" height="14" viewBox="0 0 19 14"><path d="M1.6 .6V13H18.4" stroke="#1c1c1c" stroke-width="1.2" fill="none"/><path d="M2.2 9.4L5 6.6L7.6 8.2L10.6 4.4L13 6.6L15.2 5L18 10" stroke="#f01818" stroke-width="1.2" fill="none"/></svg>
<svg class="a" style="left:279.5px;top:189.5px" width="19" height="14.5" viewBox="0 0 19 14.5"><path d="M1.6 .6V13.4H18.4" stroke="#1c1c1c" stroke-width="1.2" fill="none"/><path d="M2.4 12C7 12 7.6 10 9.4 6.6C11 3.4 12.4 2.2 17 2" stroke="#f01818" stroke-width="1.3" fill="none"/></svg>
<svg class="a" style="left:279.5px;top:207.5px" width="19" height="14.5" viewBox="0 0 19 14.5"><path d="M1.6 .6V13.4H18.4" stroke="#1c1c1c" stroke-width="1.2" fill="none"/><path d="M2.4 11.6C6 11.4 7.6 9 9.6 6C11.4 3.4 13 2.2 17.4 1.8" stroke="#18c018" stroke-width="1.2" fill="none"/><path d="M2.4 12.4C6.4 12 8 9.6 10 6.6C11.8 4 13.4 2.6 17.4 2.6" stroke="#1818e8" stroke-width="1.2" fill="none"/></svg>
<svg class="a" style="left:279.5px;top:226px" width="19" height="14" viewBox="0 0 19 14"><rect x="2" y="8" width="2.6" height="5" fill="#8a8a8a"/><rect x="4.6" y="3.4" width="3" height="9.6" fill="#18c018"/><rect x="7.6" y="6" width="3" height="7" fill="#1818e8"/><rect x="10.6" y="9" width="2.8" height="4" fill="#e8c818"/><rect x="13.4" y="6.6" width="3" height="6.4" fill="#f01010"/><rect x="16.4" y="8.4" width="2" height="4.6" fill="#8a4a10"/><path d="M1.6 .6V13H18.4" stroke="#1c1c1c" stroke-width="1.2" fill="none"/><path d="M2.4 7.6L6 2L9.4 5.2L12 8.6L15 5.4L18 8" stroke="#f01818" stroke-width="1.1" fill="none"/></svg>
<svg class="a" style="left:279.5px;top:243.5px" width="18.5" height="15.5" viewBox="0 0 18.5 15.5"><ellipse cx="9.2" cy="7.8" rx="8.2" ry="6.8" fill="#18d018"/><path d="M9.2 7.8L12 1.4A8.2 6.8 0 0 1 17.4 7.4Z" fill="#1818e8"/><path d="M9.2 7.8L17.4 7.4A8.2 6.8 0 0 1 8.4 14.6Z" fill="#f01010"/><path d="M9.2 7.8L8.4 14.6A8.2 6.8 0 0 1 2.2 11.4Z" fill="#e8c818"/><ellipse cx="9.2" cy="7.8" rx="8.2" ry="6.8" fill="none" stroke="#1c1c1c" stroke-width="1.3"/></svg>
<svg class="a" style="left:279.5px;top:262px" width="19" height="14.5" viewBox="0 0 19 14.5"><rect x="3.1" y="10.2" width="1.8" height="1.4" fill="#f01818"/><rect x="5.699999999999999" y="10.2" width="1.8" height="1.4" fill="#f01818"/><rect x="5.699999999999999" y="8.1" width="1.8" height="1.4" fill="#f01818"/><rect x="8.299999999999999" y="10.2" width="1.8" height="1.4" fill="#f01818"/><rect x="10.9" y="10.2" width="1.8" height="1.4" fill="#f01818"/><rect x="10.9" y="8.1" width="1.8" height="1.4" fill="#f01818"/><rect x="10.9" y="5.999999999999999" width="1.8" height="1.4" fill="#f01818"/><rect x="13.5" y="10.2" width="1.8" height="1.4" fill="#f01818"/><rect x="13.5" y="8.1" width="1.8" height="1.4" fill="#f01818"/><rect x="16.1" y="10.2" width="1.8" height="1.4" fill="#f01818"/><rect x="16.1" y="8.1" width="1.8" height="1.4" fill="#f01818"/><rect x="16.1" y="5.999999999999999" width="1.8" height="1.4" fill="#f01818"/><rect x="16.1" y="3.8999999999999986" width="1.8" height="1.4" fill="#f01818"/><rect x="16.1" y="1.799999999999999" width="1.8" height="1.4" fill="#f01818"/><path d="M1.6 .6V13.4H18.4" stroke="#1c1c1c" stroke-width="1.2" fill="none"/></svg>
<svg class="a" style="left:280px;top:280px" width="19" height="17" viewBox="0 0 19 17"><path d="M6 .8L8.4 3L11 1.4L12 4.2L15.4 4L14.4 7L17.6 8.6L14.4 10.4L15 13L11.4 12.4L9.6 14.8L7.4 12.6L4 13.4L4.6 10.4L1 9L4 6.8L2.8 3.6L6 4Z" fill="#6ede2a" stroke="#2aa01a" stroke-width="1"/><path d="M5 4.6L13.6 12.4M12.6 4.8L6 11.6M9 3L9.6 13M3.4 8.6L15.6 8.8" stroke="#d8f048" stroke-width=".9" fill="none"/><path d="M12.6 11.6L17 16" stroke="#2aa01a" stroke-width="1.4"/></svg>
<svg class="a" style="left:280px;top:299.5px" width="16" height="14.5" viewBox="0 0 16 14.5"><path d="M1 4.6L5.4 1H15L11 4.6Z" fill="#161210"/><path d="M1 4.6H11V13.6H1Z" fill="#a85a32"/><path d="M11 4.6L15 1V10L11 13.6Z" fill="#7c3c1e"/><path d="M1.4 7.2H10.6M1.4 10H10.6" stroke="#c87a52" stroke-width=".8"/></svg>
<svg class="a" style="left:279.5px;top:324.5px" width="19" height="15.5" viewBox="0 0 19 15.5"><rect x="7.5" y="3.8" width="1.1" height="1.1" fill="#3434e8"/><rect x="7.5" y="9.3" width="1.1" height="1.1" fill="#f03434"/><rect x="4.0" y="2.3" width="1.1" height="1.1" fill="#3434e8"/><rect x="4.0" y="11.2" width="1.1" height="1.1" fill="#f03434"/><rect x="3.8" y="2.1" width="1.1" height="1.1" fill="#3434e8"/><rect x="3.8" y="10.3" width="1.1" height="1.1" fill="#f03434"/><rect x="9.1" y="4.8" width="1.1" height="1.1" fill="#3434e8"/><rect x="9.1" y="6.3" width="1.1" height="1.1" fill="#f03434"/><rect x="8.9" y="7.1" width="1.1" height="1.1" fill="#3434e8"/><rect x="8.9" y="6.5" width="1.1" height="1.1" fill="#f03434"/><rect x="6.1" y="4.3" width="1.1" height="1.1" fill="#3434e8"/><rect x="6.1" y="11.4" width="1.1" height="1.1" fill="#f03434"/><rect x="11.1" y="7.4" width="1.1" height="1.1" fill="#3434e8"/><rect x="11.1" y="7.6" width="1.1" height="1.1" fill="#f03434"/><rect x="3.7" y="3.1" width="1.1" height="1.1" fill="#3434e8"/><rect x="3.7" y="11.2" width="1.1" height="1.1" fill="#f03434"/><rect x="5.0" y="1.8" width="1.1" height="1.1" fill="#3434e8"/><rect x="5.0" y="10.2" width="1.1" height="1.1" fill="#f03434"/><rect x="14.4" y="9.4" width="1.1" height="1.1" fill="#3434e8"/><rect x="14.4" y="3.7" width="1.1" height="1.1" fill="#f03434"/><rect x="11.9" y="8.0" width="1.1" height="1.1" fill="#3434e8"/><rect x="11.9" y="5.5" width="1.1" height="1.1" fill="#f03434"/><rect x="3.9" y="0.7" width="1.1" height="1.1" fill="#3434e8"/><rect x="3.9" y="10.8" width="1.1" height="1.1" fill="#f03434"/><rect x="12.5" y="8.7" width="1.1" height="1.1" fill="#3434e8"/><rect x="12.5" y="4.3" width="1.1" height="1.1" fill="#f03434"/><rect x="11.2" y="7.7" width="1.1" height="1.1" fill="#3434e8"/><rect x="11.2" y="5.3" width="1.1" height="1.1" fill="#f03434"/><rect x="14.1" y="10.8" width="1.1" height="1.1" fill="#3434e8"/><rect x="14.1" y="2.8" width="1.1" height="1.1" fill="#f03434"/><rect x="11.0" y="7.8" width="1.1" height="1.1" fill="#3434e8"/><rect x="11.0" y="7.3" width="1.1" height="1.1" fill="#f03434"/><rect x="13.2" y="8.7" width="1.1" height="1.1" fill="#3434e8"/><rect x="13.2" y="5.9" width="1.1" height="1.1" fill="#f03434"/><rect x="4.7" y="2.4" width="1.1" height="1.1" fill="#3434e8"/><rect x="4.7" y="11.9" width="1.1" height="1.1" fill="#f03434"/><rect x="5.1" y="3.0" width="1.1" height="1.1" fill="#3434e8"/><rect x="5.1" y="9.3" width="1.1" height="1.1" fill="#f03434"/><rect x="12.4" y="9.6" width="1.1" height="1.1" fill="#3434e8"/><rect x="12.4" y="5.3" width="1.1" height="1.1" fill="#f03434"/><rect x="15.3" y="10.4" width="1.1" height="1.1" fill="#3434e8"/><rect x="15.3" y="3.4" width="1.1" height="1.1" fill="#f03434"/><rect x="11.3" y="8.2" width="1.1" height="1.1" fill="#3434e8"/><rect x="11.3" y="5.7" width="1.1" height="1.1" fill="#f03434"/><path d="M1.6 .6V14.4H18.4" stroke="#1c1c1c" stroke-width="1.2" fill="none"/></svg>
<div class="t" style="left:282.20px;top:352.44px;font-size:12px;color:#111;transform:scaleX(1.0000);transform-origin:0 0;font-weight:bold;font-style:italic;">f</div>
<svg class="a" style="left:289px;top:351px" width="9.4" height="15.4" viewBox="0 0 9.4 15.4"><rect x=".3" y=".3" width="8.8" height="14.6" rx="1.2" fill="#161616"/><rect x="1.7" y="2.2" width="2.6" height="2.4" fill="#f4f4f4"/><rect x="5.1" y="2.2" width="2.6" height="2.4" fill="#f4f4f4"/><rect x="1.7" y="6.4" width="2.6" height="2.4" fill="#f4f4f4"/><rect x="5.1" y="6.4" width="2.6" height="2.4" fill="#f4f4f4"/><rect x="1.7" y="10.6" width="2.6" height="2.4" fill="#f4f4f4"/><rect x="5.1" y="10.6" width="2.6" height="2.4" fill="#f4f4f4"/></svg>
</div>
<div class="a" style="left:457.1px;top:248.8px;width:502.1px;height:375.4px;background:#fff"></div>
<div class="a" style="left:457.1px;top:248.8px;width:2.5px;height:375.4px;background:#dad7d0"></div>
<div class="a" style="left:457.1px;top:248.8px;width:501px;height:1.4px;background:#dad7d0"></div>
<div class="a" style="left:460.6px;top:265.6px;width:495px;height:24px;background:#d4d0c8"></div>
<div class="a" style="left:955.6px;top:264px;width:2px;height:25.6px;background:#a5a29a"></div>
<div class="a" style="left:957.2px;top:249.5px;width:1px;height:374px;background:#d0cdc6"></div>
<div class="a" style="left:958.2px;top:249.5px;width:1.1px;height:374.7px;background:#4a4844"></div>
<div class="a" style="left:457.1px;top:621.2px;width:501px;height:1.5px;background:#d0cdc6"></div>
<div class="a" style="left:457.1px;top:622.7px;width:502.2px;height:1.5px;background:#4a4844"></div>
<div class="a" style="left:459.8px;top:251px;width:497.4px;height:12.8px;background:linear-gradient(90deg,#0a246a 0,#14327e 12%,#a6caf0 100%)"></div>
<svg class="a" style="left:461px;top:251.6px" width="10.6" height="11.4" viewBox="0 0 18 15" preserveAspectRatio="none"><rect x="0" y="0" width="18" height="15" fill="#fffdf6"/><rect x="0" y="0" width="17" height="2.4" fill="#0a3a9a"/><rect x="15" y="0.3" width="2" height="1.6" fill="#dfe6d0"/><rect x="1" y="4" width="4" height="2.2" fill="#d98a5a"/><rect x="5.2" y="4.4" width="2.4" height="2" fill="#e9b26a"/><rect x="8.4" y="4" width="3" height="2.6" fill="#a8501e"/><rect x="12.6" y="4.4" width="3" height="2.2" fill="#d6602a"/><rect x="4.6" y="9.6" width="1.8" height="3.6" fill="#e8701a"/><rect x="6.4" y="8.4" width="1.6" height="4.8" fill="#20b0c0"/><rect x="8" y="7.6" width="2.4" height="5.6" fill="#f01010"/><rect x="10.4" y="8.6" width="1.4" height="4.6" fill="#208030"/><rect x="11.2" y="10.4" width="3" height="2.8" fill="#e8f018"/><path d="M17.3 0.5V14.3H0.6" fill="none" stroke="#231a10" stroke-width="1.3"/></svg>
<div class="t" style="left:472.90px;top:253.49px;font-size:8.4px;color:#fff;transform:scaleX(0.9413);transform-origin:0 0;font-weight:bold;">Histograma</div>
<svg class="a" style="left:922.3px;top:252.4px" width="9.2" height="9.2" viewBox="0 0 9.2 9.2"><rect x="0" y="0" width="9.2" height="9.2" fill="#e2dfd8"/><path d="M.4 8.8V.4H8.799999999999999" stroke="#fff" stroke-width=".8" fill="none"/><path d="M8.799999999999999 .4V8.8H.4" stroke="#404040" stroke-width=".9" fill="none"/><path d="M2.2 6.8H6.4" stroke="#000" stroke-width="1.4"/></svg>
<svg class="a" style="left:932.6px;top:252.4px" width="10.2" height="9.2" viewBox="0 0 10.2 9.2"><rect x="0" y="0" width="10.2" height="9.2" fill="#e2dfd8"/><path d="M.4 8.8V.4H9.799999999999999" stroke="#fff" stroke-width=".8" fill="none"/><path d="M9.799999999999999 .4V8.8H.4" stroke="#404040" stroke-width=".9" fill="none"/><rect x="2.4" y="2" width="5.4" height="5" fill="none" stroke="#000" stroke-width="1"/><path d="M2.4 2.6H7.8" stroke="#000" stroke-width="1.6"/></svg>
<svg class="a" style="left:945px;top:252.4px" width="9.8" height="9.2" viewBox="0 0 9.8 9.2"><rect x="0" y="0" width="9.8" height="9.2" fill="#e2dfd8"/><path d="M.4 8.8V.4H9.4" stroke="#fff" stroke-width=".8" fill="none"/><path d="M9.4 .4V8.8H.4" stroke="#404040" stroke-width=".9" fill="none"/><path d="M2.6 2.2L7.2 7M7.2 2.2L2.6 7" stroke="#000" stroke-width="1.5"/></svg>
<div class="a" style="left:460.4px;top:265.4px;width:70.5px;height:24.200000000000045px;box-sizing:border-box;border-left:1px solid #fff;border-top:1px solid #fff;border-right:1.2px solid #6a6860;border-bottom:1px solid #8a8880"></div>
<div class="a" style="left:531.6px;top:265.4px;width:41.10000000000002px;height:24.200000000000045px;box-sizing:border-box;border-left:1px solid #fff;border-top:1px solid #fff;border-right:1.2px solid #6a6860;border-bottom:1px solid #8a8880"></div>
<div class="a" style="left:573.4px;top:265.4px;width:27.800000000000068px;height:24.200000000000045px;box-sizing:border-box;border-left:1px solid #fff;border-top:1px solid #fff;border-right:1.2px solid #6a6860;border-bottom:1px solid #8a8880"></div>
<div class="a" style="left:602px;top:265.4px;width:41px;height:24.200000000000045px;box-sizing:border-box;border-left:1px solid #fff;border-top:1px solid #fff;border-right:1.2px solid #6a6860;border-bottom:1px solid #8a8880"></div>
<div class="a" style="left:643.8px;top:265.4px;width:25.200000000000045px;height:24.200000000000045px;box-sizing:border-box;border-left:1px solid #fff;border-top:1px solid #fff;border-right:1.2px solid #6a6860;border-bottom:1px solid #8a8880"></div>
<div class="a" style="left:669.8px;top:265.4px;width:45.200000000000045px;height:24.200000000000045px;box-sizing:border-box;border-left:1px solid #fff;border-top:1px solid #fff;border-right:1.2px solid #6a6860;border-bottom:1px solid #8a8880"></div>
<div class="t" style="left:461.50px;top:270.00px;font-size:7.8px;color:#1a1a1a;transform:scaleX(0.8759);transform-origin:0 0;-webkit-text-stroke:.28px #2a2a2a;">Número</div>
<div class="t" style="left:461.50px;top:278.00px;font-size:7.8px;color:#1a1a1a;transform:scaleX(0.9256);transform-origin:0 0;-webkit-text-stroke:.28px #2a2a2a;">de clases</div>
<div class="a" style="left:494.8px;top:271px;width:33px;height:15.4px;background:#fff;box-sizing:border-box;border-top:1.3px solid #55524c;border-left:1.3px solid #55524c;border-bottom:1px solid #f4f2ec;border-right:1px solid #f4f2ec"></div>
<div class="t" style="left:497.00px;top:274.11px;font-size:7.9px;color:#1a1a1a;transform:scaleX(0.8990);transform-origin:0 0;">16</div>
<svg class="a" style="left:516.4px;top:272px" width="10.8" height="13.6" viewBox="0 0 10.8 13.6"><rect width="10.8" height="13.6" fill="#d4d0c8"/><path d="M.4 6.4V.4H10.4M.4 13.2V7.2H10.4" stroke="#fff" stroke-width=".8" fill="none"/><path d="M10.4 .4V6.4H.4M10.4 7.2V13.2H.4" stroke="#55524c" stroke-width="1" fill="none"/><path d="M4 4.2L5.4 2.6L6.8 4.2ZM4 9.4L5.4 11L6.8 9.4Z" fill="#000"/></svg>
<div class="t" style="left:534.90px;top:266.27px;font-size:7.6px;color:#76746e;transform:scaleX(0.9309);transform-origin:0 0;text-shadow:.8px .8px 0 #fff;">Frecuencia</div>
<div class="t" style="left:541.00px;top:272.17px;font-size:7.6px;color:#76746e;transform:scaleX(0.9224);transform-origin:0 0;text-shadow:.8px .8px 0 #fff;">relativa</div>
<svg class="a" style="left:547.8px;top:280.6px" width="8" height="8.2" viewBox="0 0 9 9" preserveAspectRatio="none"><rect x="0" y="0" width="9" height="9" fill="#fff"/><path d="M.5 8.6V.5H8.6" stroke="#6a6860" stroke-width="1" fill="none"/><path d="M2 4.2L3.8 6.4L7.2 2.2" stroke="#000" stroke-width="1.7" fill="none"/></svg>
<div class="t" style="left:575.80px;top:265.70px;font-size:5.2px;color:#1a1a1a;transform:scaleX(0.9485);transform-origin:0 0;font-weight:bold;">Etiquetas</div>
<div class="a" style="left:576.5px;top:277px;width:7.5px;height:11.4px;background:#ff0a0a"></div>
<div class="a" style="left:589.9px;top:282px;width:6.6px;height:6.4px;background:#ff0a0a"></div>
<div class="a" style="left:574.9px;top:271.7px;width:11.9px;height:5.4px;background:#e4dc1c"></div>
<div class="a" style="left:588px;top:276.9px;width:11px;height:5.2px;background:#e4dc1c"></div>
<div class="t" style="left:576.00px;top:271.93px;font-size:5.4px;color:#3a3a10;transform:scaleX(0.9515);transform-origin:0 0;font-weight:bold;">0.45</div>
<div class="t" style="left:589.00px;top:277.03px;font-size:5.4px;color:#3a3a10;transform:scaleX(0.8944);transform-origin:0 0;font-weight:bold;">0.35</div>
<div class="a" style="left:574.6px;top:288.2px;width:26px;height:1px;background:#333"></div>
<svg class="a" style="left:615.3px;top:266.8px" width="14.2" height="14.6" viewBox="0 0 14.2 14.6"><path d="M2.6 9.6C4.8 9 5.6 4.6 7.1 4.6C8.6 4.6 9.4 9 11.6 9.6Z" fill="#b8c0e8" stroke="#3a48b8" stroke-width=".9"/><ellipse cx="7.1" cy="7.3" rx="6" ry="6.2" fill="none" stroke="#f01818" stroke-width="1.6"/><path d="M2.9 11.5L11.3 3.1" stroke="#f01818" stroke-width="1.6"/></svg>
<div class="t" style="left:603.60px;top:280.23px;font-size:8px;color:#1a1a1a;transform:scaleX(0.8670);transform-origin:0 0;-webkit-text-stroke:.28px #2a2a2a;">Dist. normal</div>
<div class="a" style="left:673px;top:270px;width:39px;height:13.8px;background:#fff;box-sizing:border-box;border-top:1.3px solid #55524c;border-left:1.3px solid #55524c;border-bottom:1px solid #f4f2ec;border-right:1px solid #f4f2ec"></div>
<div class="t" style="left:675.00px;top:272.64px;font-size:8.1px;color:#1a1a1a;transform:scaleX(0.8930);transform-origin:0 0;-webkit-text-stroke:.28px #2a2a2a;">100%</div>
<svg class="a" style="left:701.2px;top:271.3px" width="10" height="11.8" viewBox="0 0 10 11.8"><rect width="10" height="11.8" fill="#d4d0c8"/><path d="M.4 11.4V.4H9.6" stroke="#fff" stroke-width=".8" fill="none"/><path d="M9.6 .4V11.4H.4" stroke="#404040" stroke-width="1" fill="none"/><path d="M2.8 4.8H7.2L5 7.4Z" fill="#000"/></svg>
<div class="a" style="left:716.6px;top:267.8px;width:222px;height:20.6px;box-sizing:border-box;border:1px solid #8a8880;box-shadow:inset 1px 1px 0 #fbfaf6,1px 1px 0 #fbfaf6"></div>
<div class="a" style="left:717.4px;top:266px;width:21px;height:5px;background:#d4d0c8"></div>
<div class="t" style="left:718.10px;top:264.74px;font-size:8.1px;color:#1a1a1a;transform:scaleX(0.7546);transform-origin:0 0;-webkit-text-stroke:.28px #2a2a2a;">Límites</div>
<div class="t" style="left:719.40px;top:275.39px;font-size:8.4px;color:#1a1a1a;transform:scaleX(0.7734);transform-origin:0 0;-webkit-text-stroke:.28px #2a2a2a;">Automático</div>
<svg class="a" style="left:754.4px;top:275px" width="8.4" height="8.5" viewBox="0 0 9 9" preserveAspectRatio="none"><rect x="0" y="0" width="9" height="9" fill="#fff"/><path d="M.5 8.6V.5H8.6" stroke="#6a6860" stroke-width="1" fill="none"/><path d="M2 4.2L3.8 6.4L7.2 2.2" stroke="#000" stroke-width="1.7" fill="none"/></svg>
<svg class="a" style="left:0;top:0" width="960" height="720" viewBox="0 0 960 720" font-family="'Liberation Sans',sans-serif" font-size="9.9" fill="#262626" stroke="#262626" stroke-width=".15"><path d="M504.45 568.4H856" stroke="#8e8e8e" stroke-width="1.3" stroke-dasharray="1.5 2.5" fill="none"/><path d="M504.45 539.4H856" stroke="#8e8e8e" stroke-width="1.3" stroke-dasharray="1.5 2.5" fill="none"/><path d="M504.45 510.5H856" stroke="#8e8e8e" stroke-width="1.3" stroke-dasharray="1.5 2.5" fill="none"/><path d="M504.45 481.6H856" stroke="#8e8e8e" stroke-width="1.3" stroke-dasharray="1.5 2.5" fill="none"/><path d="M504.45 452.6H856" stroke="#8e8e8e" stroke-width="1.3" stroke-dasharray="1.5 2.5" fill="none"/><path d="M504.45 423.7H856" stroke="#8e8e8e" stroke-width="1.3" stroke-dasharray="1.5 2.5" fill="none"/><path d="M504.45 394.8H856" stroke="#8e8e8e" stroke-width="1.3" stroke-dasharray="1.5 2.5" fill="none"/><path d="M504.45 365.9H856" stroke="#8e8e8e" stroke-width="1.3" stroke-dasharray="1.5 2.5" fill="none"/><path d="M504.45 336.9H856" stroke="#8e8e8e" stroke-width="1.3" stroke-dasharray="1.5 2.5" fill="none"/><path d="M504.45 308.0H856" stroke="#8e8e8e" stroke-width="1.3" stroke-dasharray="1.5 2.5" fill="none"/><path d="M546.6 304V596.3" stroke="#8e8e8e" stroke-width="1.3" stroke-dasharray="1.5 2.5" fill="none"/><path d="M590.7 304V596.3" stroke="#8e8e8e" stroke-width="1.3" stroke-dasharray="1.5 2.5" fill="none"/><path d="M634.8 304V596.3" stroke="#8e8e8e" stroke-width="1.3" stroke-dasharray="1.5 2.5" fill="none"/><path d="M679.0 304V596.3" stroke="#8e8e8e" stroke-width="1.3" stroke-dasharray="1.5 2.5" fill="none"/><path d="M723.1 304V596.3" stroke="#8e8e8e" stroke-width="1.3" stroke-dasharray="1.5 2.5" fill="none"/><path d="M767.2 304V596.3" stroke="#8e8e8e" stroke-width="1.3" stroke-dasharray="1.5 2.5" fill="none"/><path d="M811.3 304V596.3" stroke="#8e8e8e" stroke-width="1.3" stroke-dasharray="1.5 2.5" fill="none"/><rect x="511.27" y="549.08" width="19.41" height="48.22" fill="#ff0000" stroke="#280000" stroke-width="1"/><rect x="530.69" y="573.19" width="19.42" height="24.11" fill="#ff0000" stroke="#280000" stroke-width="1"/><rect x="550.11" y="549.08" width="19.41" height="48.22" fill="#ff0000" stroke="#280000" stroke-width="1"/><rect x="569.52" y="561.14" width="19.41" height="36.16" fill="#ff0000" stroke="#280000" stroke-width="1"/><rect x="588.93" y="524.97" width="19.42" height="72.33" fill="#ff0000" stroke="#280000" stroke-width="1"/><rect x="608.35" y="500.87" width="19.41" height="96.43" fill="#ff0000" stroke="#280000" stroke-width="1"/><rect x="627.76" y="512.92" width="19.41" height="84.38" fill="#ff0000" stroke="#280000" stroke-width="1"/><rect x="647.18" y="452.65" width="19.42" height="144.65" fill="#ff0000" stroke="#280000" stroke-width="1"/><rect x="666.60" y="428.54" width="19.41" height="168.76" fill="#ff0000" stroke="#280000" stroke-width="1"/><rect x="686.01" y="416.49" width="19.41" height="180.81" fill="#ff0000" stroke="#280000" stroke-width="1"/><rect x="705.42" y="464.70" width="19.41" height="132.60" fill="#ff0000" stroke="#280000" stroke-width="1"/><rect x="724.84" y="488.81" width="19.42" height="108.49" fill="#ff0000" stroke="#280000" stroke-width="1"/><rect x="744.25" y="416.49" width="19.41" height="180.81" fill="#ff0000" stroke="#280000" stroke-width="1"/><rect x="763.67" y="512.92" width="19.42" height="84.38" fill="#ff0000" stroke="#280000" stroke-width="1"/><rect x="783.09" y="585.25" width="19.41" height="12.05" fill="#ff0000" stroke="#280000" stroke-width="1"/><rect x="802.50" y="573.19" width="19.41" height="24.11" fill="#ff0000" stroke="#280000" stroke-width="1"/><polyline points="502.4,591.9 506.9,591.0 511.3,589.9 515.7,588.6 520.1,587.2 524.5,585.6 528.9,583.8 533.3,581.8 537.8,579.5 542.2,577.0 546.6,574.3 551.0,571.3 555.4,568.0 559.8,564.5 564.2,560.7 568.6,556.6 573.0,552.2 577.5,547.6 581.9,542.7 586.3,537.7 590.7,532.4 595.1,526.9 599.5,521.3 603.9,515.5 608.4,509.7 612.8,503.9 617.2,498.1 621.6,492.4 626.0,486.8 630.4,481.4 634.8,476.2 639.2,471.4 643.6,466.8 648.1,462.7 652.5,459.0 656.9,455.8 661.3,453.2 665.7,451.1 670.1,449.5 674.5,448.6 679.0,448.3 683.4,448.6 687.8,449.5 692.2,451.1 696.6,453.2 701.0,455.8 705.4,459.0 709.8,462.7 714.2,466.8 718.7,471.4 723.1,476.2 727.5,481.4 731.9,486.8 736.3,492.4 740.7,498.1 745.1,503.9 749.5,509.7 754.0,515.5 758.4,521.3 762.8,526.9 767.2,532.4 771.6,537.7 776.0,542.7 780.4,547.6 784.8,552.2 789.3,556.6 793.7,560.7 798.1,564.5 802.5,568.0 806.9,571.3 811.3,574.3 815.7,577.0 820.1,579.5 824.6,581.8 829.0,583.8 833.4,585.6 837.8,587.2 842.2,588.6 846.6,589.9 851.0,591.0 855.5,591.9" fill="none" stroke="#0a0af0" stroke-width="1.5" stroke-linejoin="round"/><path d="M502.45 597.9V302.8H856.6V597.9" stroke="#000" stroke-width="1.7" fill="none"/><path d="M501.65 597.3H857.4" stroke="#000" stroke-width="1.7" fill="none"/><path d="M856.6 302V597.3" stroke="#000" stroke-width="1.3" fill="none"/><path d="M498.6 597.3H502.45M857 597.3H860.4" stroke="#000" stroke-width="1.2"/><text x="493.2" y="600.8" textLength="4.5" lengthAdjust="spacingAndGlyphs">0</text><text x="861.4" y="600.8" textLength="4.5" lengthAdjust="spacingAndGlyphs">0</text><path d="M498.6 568.4H502.45M857 568.4H860.4" stroke="#000" stroke-width="1.2"/><text x="482.2" y="571.9" textLength="15.4" lengthAdjust="spacingAndGlyphs">0.02</text><text x="861.4" y="571.9" textLength="19.8" lengthAdjust="spacingAndGlyphs">0.002</text><path d="M498.6 539.4H502.45M857 539.4H860.4" stroke="#000" stroke-width="1.2"/><text x="482.2" y="542.9" textLength="15.4" lengthAdjust="spacingAndGlyphs">0.04</text><text x="861.4" y="542.9" textLength="19.8" lengthAdjust="spacingAndGlyphs">0.004</text><path d="M498.6 510.5H502.45M857 510.5H860.4" stroke="#000" stroke-width="1.2"/><text x="482.2" y="514.0" textLength="15.4" lengthAdjust="spacingAndGlyphs">0.06</text><text x="861.4" y="514.0" textLength="19.8" lengthAdjust="spacingAndGlyphs">0.006</text><path d="M498.6 481.6H502.45M857 481.6H860.4" stroke="#000" stroke-width="1.2"/><text x="482.2" y="485.1" textLength="15.4" lengthAdjust="spacingAndGlyphs">0.08</text><text x="861.4" y="485.1" textLength="19.8" lengthAdjust="spacingAndGlyphs">0.008</text><path d="M498.6 452.6H502.45M857 452.6H860.4" stroke="#000" stroke-width="1.2"/><text x="486.7" y="456.1" textLength="10.9" lengthAdjust="spacingAndGlyphs">0.1</text><text x="861.4" y="456.1" textLength="15.4" lengthAdjust="spacingAndGlyphs">0.01</text><path d="M498.6 423.7H502.45M857 423.7H860.4" stroke="#000" stroke-width="1.2"/><text x="482.2" y="427.2" textLength="15.4" lengthAdjust="spacingAndGlyphs">0.12</text><text x="861.4" y="427.2" textLength="19.8" lengthAdjust="spacingAndGlyphs">0.012</text><path d="M498.6 394.8H502.45M857 394.8H860.4" stroke="#000" stroke-width="1.2"/><text x="482.2" y="398.3" textLength="15.4" lengthAdjust="spacingAndGlyphs">0.14</text><text x="861.4" y="398.3" textLength="19.8" lengthAdjust="spacingAndGlyphs">0.014</text><path d="M498.6 365.9H502.45M857 365.9H860.4" stroke="#000" stroke-width="1.2"/><text x="482.2" y="369.4" textLength="15.4" lengthAdjust="spacingAndGlyphs">0.16</text><text x="861.4" y="369.4" textLength="19.8" lengthAdjust="spacingAndGlyphs">0.016</text><path d="M498.6 336.9H502.45M857 336.9H860.4" stroke="#000" stroke-width="1.2"/><text x="482.2" y="340.4" textLength="15.4" lengthAdjust="spacingAndGlyphs">0.18</text><text x="861.4" y="340.4" textLength="19.8" lengthAdjust="spacingAndGlyphs">0.018</text><path d="M498.6 308.0H502.45M857 308.0H860.4" stroke="#000" stroke-width="1.2"/><text x="486.7" y="311.5" textLength="10.9" lengthAdjust="spacingAndGlyphs">0.2</text><text x="861.4" y="311.5" textLength="15.4" lengthAdjust="spacingAndGlyphs">0.02</text><path d="M502.4 597.3V601.3" stroke="#000" stroke-width="1.2"/><path d="M524.5 598.3V600.3" stroke="#888" stroke-width="1"/><text x="497.9" y="611" textLength="9.0" lengthAdjust="spacingAndGlyphs">25</text><path d="M546.6 597.3V601.3" stroke="#000" stroke-width="1.2"/><path d="M568.6 598.3V600.3" stroke="#888" stroke-width="1"/><text x="542.1" y="611" textLength="9.0" lengthAdjust="spacingAndGlyphs">50</text><path d="M590.7 597.3V601.3" stroke="#000" stroke-width="1.2"/><path d="M612.8 598.3V600.3" stroke="#888" stroke-width="1"/><text x="586.2" y="611" textLength="9.0" lengthAdjust="spacingAndGlyphs">75</text><path d="M634.8 597.3V601.3" stroke="#000" stroke-width="1.2"/><path d="M656.9 598.3V600.3" stroke="#888" stroke-width="1"/><text x="628.1" y="611" textLength="13.5" lengthAdjust="spacingAndGlyphs">100</text><path d="M679.0 597.3V601.3" stroke="#000" stroke-width="1.2"/><path d="M701.0 598.3V600.3" stroke="#888" stroke-width="1"/><text x="672.2" y="611" textLength="13.5" lengthAdjust="spacingAndGlyphs">125</text><path d="M723.1 597.3V601.3" stroke="#000" stroke-width="1.2"/><path d="M745.1 598.3V600.3" stroke="#888" stroke-width="1"/><text x="716.3" y="611" textLength="13.5" lengthAdjust="spacingAndGlyphs">150</text><path d="M767.2 597.3V601.3" stroke="#000" stroke-width="1.2"/><path d="M789.3 598.3V600.3" stroke="#888" stroke-width="1"/><text x="760.5" y="611" textLength="13.5" lengthAdjust="spacingAndGlyphs">175</text><path d="M811.3 597.3V601.3" stroke="#000" stroke-width="1.2"/><path d="M833.4 598.3V600.3" stroke="#888" stroke-width="1"/><text x="804.6" y="611" textLength="13.5" lengthAdjust="spacingAndGlyphs">200</text><path d="M855.5 597.3V601.3" stroke="#000" stroke-width="1.2"/><text x="848.7" y="611" textLength="13.5" lengthAdjust="spacingAndGlyphs">225</text><text x="671.8" y="622.4" font-size="8.8" textLength="15.8" lengthAdjust="spacingAndGlyphs">resp</text></svg>
<div class="a" style="left:457.1px;top:621.2px;width:501px;height:1.5px;background:#d0cdc6"></div>
<div class="a" style="left:457.1px;top:622.7px;width:502.2px;height:1.5px;background:#4a4844"></div>
<div class="a" style="left:457.1px;top:624.2px;width:503px;height:6px;background:#fff"></div>
<div class="a" style="left:452.5px;top:624.2px;width:65.5px;height:5.4px;background:#ece9d8"></div>
</body></html>
